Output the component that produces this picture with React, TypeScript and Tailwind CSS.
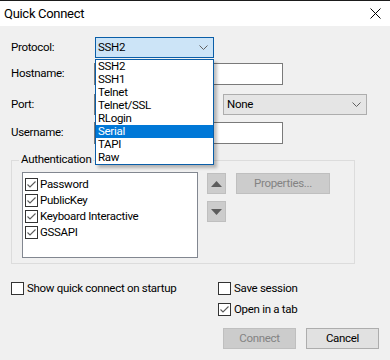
import type { SVGProps } from "react";

const font = "font-['Roboto','Liberation_Sans',sans-serif]";

const protocols = ["SSH2", "SSH1", "Telnet", "Telnet/SSL", "RLogin", "Serial", "TAPI", "Raw"];
const authMethods = ["Password", "PublicKey", "Keyboard Interactive", "GSSAPI"];

export default function App() {
  return (
    <div
      className={`relative h-[360px] w-[390px] overflow-hidden border-t border-[#1b1b1b] bg-[#f0f0f0] text-[11.5px] leading-none tracking-[-0.3px] text-black ${font}`}
    >
      {/* title bar */}
      <div className="flex h-[25px] items-center justify-between bg-white pl-[4px] pr-[9px]">
        <span className="text-[13px] tracking-[-0.3px]">Quick Connect</span>
        <IconClose className="h-[11px] w-[11px] text-black" />
      </div>

      <div className="flex flex-col pl-[11px]">
        {/* Protocol */}
        <div className="mt-[11px] flex h-[21px] items-center">
          <span className="w-[84px]">Protocol:</span>
          <div className="flex h-[21px] w-[119px] items-center justify-between border border-[#0a5ea8] bg-[#cce4f7] pl-[2px] pr-[5px]">
            <span>SSH2</span>
            <ChevronDown className="h-[5px] w-[9px] text-[#606060]" />
          </div>
        </div>

        {/* Hostname */}
        <div className="mt-[5px] flex h-[22px] items-center">
          <span className="w-[83px]">Hostname:</span>
          <div className="h-[22px] w-[189px] border border-[#7a7a7a] bg-white" />
        </div>

        {/* Port */}
        <div className="mt-[9px] flex h-[21px] items-center">
          <span className="w-[83px]">Port:</span>
          <div className="h-[21px] w-[119px] border border-[#7a7a7a] bg-white" />
          <div className="ml-[10px] flex h-[21px] w-[144px] items-center justify-between border border-[#adadad] bg-[#e5e5e5] pl-[3px] pr-[5px]">
            <span>None</span>
            <ChevronDown className="h-[5px] w-[9px] text-[#606060]" />
          </div>
        </div>

        {/* Username */}
        <div className="mt-[7px] flex h-[22px] items-center">
          <span className="w-[83px]">Username:</span>
          <div className="h-[22px] w-[189px] border border-[#7a7a7a] bg-white" />
        </div>

        {/* Authentication group */}
        <div className="relative mt-[16px] flex h-[104px] w-[344px] items-start border border-[#dcdcdc] pl-[10px] pt-[11px]">
          <span className="absolute -top-[7px] left-[7px] bg-[#f0f0f0] px-[2px]">Authentication</span>
          <div className="flex h-[86px] w-[176px] flex-col gap-[3px] border border-[#828790] bg-white pl-[2px] pt-[5px]">
            {authMethods.map((m) => (
              <div key={m} className="flex h-[13px] items-center gap-[2px]">
                <CheckBox checked />
                <span>{m}</span>
              </div>
            ))}
          </div>
          <div className="ml-[9px] flex flex-col gap-[7px] pt-[1px]">
            <div className="flex h-[21px] w-[19px] items-center justify-center border border-[#bfbfbf] bg-[#cccccc]">
              <TriangleUp className="h-[6px] w-[11px] text-[#5c5c5c]" />
            </div>
            <div className="flex h-[21px] w-[19px] items-center justify-center border border-[#bfbfbf] bg-[#cccccc]">
              <TriangleDown className="h-[6px] w-[11px] text-[#5c5c5c]" />
            </div>
          </div>
          <div className="ml-[10px] mt-[1px] flex h-[21px] w-[94px] items-center justify-center border border-[#bfbfbf] bg-[#cccccc] text-[#838383]">
            Properties...
          </div>
        </div>

        {/* bottom */}
        <div className="mt-[18px] flex">
          <div className="flex w-[207px] items-start">
            <label className="flex h-[13px] items-center gap-[3px]">
              <CheckBox />
              <span>Show quick connect on startup</span>
            </label>
          </div>
          <div className="flex flex-col">
            <label className="flex h-[13px] items-center gap-[3px]">
              <CheckBox />
              <span>Save session</span>
            </label>
            <label className="mt-[8px] flex h-[13px] items-center gap-[3px]">
              <CheckBox checked />
              <span>Open in a tab</span>
            </label>
            <div className="ml-[5px] mt-[12px] flex gap-[10px]">
              <div className="flex h-[21px] w-[73px] items-center justify-center border border-[#bfbfbf] bg-[#cccccc] text-[#838383]">
                Connect
              </div>
              <div className="flex h-[21px] w-[73px] items-center justify-center border border-[#adadad] bg-[#e1e1e1]">
                Cancel
              </div>
            </div>
          </div>
        </div>
      </div>

      {/* open protocol list */}
      <ul className="absolute left-[95px] top-[58px] w-[119px] border border-[#0a5ea8] bg-white shadow-[3px_3px_3px_rgba(0,0,0,0.25)]">
        {protocols.map((p) => (
          <li
            key={p}
            className={`flex h-[13px] items-center pl-[2px] ${p === "Serial" ? "bg-[#0078d7] text-white" : ""}`}
          >
            {p}
          </li>
        ))}
      </ul>
    </div>
  );
}

function CheckBox({ checked = false }: { checked?: boolean }) {
  return (
    <span className="flex h-[13px] w-[13px] shrink-0 items-center justify-center border border-[#333333] bg-white">
      {checked && (
        <svg viewBox="0 0 11 11" className="h-[11px] w-[11px]" fill="none" stroke="#5a5a5a" strokeWidth="1.1">
          <path d="M1.5 5.5 L4 8 L9.5 2.5" />
        </svg>
      )}
    </span>
  );
}

function IconClose(props: SVGProps<SVGSVGElement>) {
  return (
    <svg viewBox="0 0 11 11" fill="none" stroke="currentColor" strokeWidth="1" aria-hidden {...props}>
      <path d="M0.5 0.5 L10.5 10.5 M10.5 0.5 L0.5 10.5" />
    </svg>
  );
}

function ChevronDown(props: SVGProps<SVGSVGElement>) {
  return (
    <svg viewBox="0 0 9 5" fill="none" stroke="currentColor" strokeWidth="1" aria-hidden {...props}>
      <path d="M0.5 0.5 L4.5 4.5 L8.5 0.5" />
    </svg>
  );
}

function TriangleUp(props: SVGProps<SVGSVGElement>) {
  return (
    <svg viewBox="0 0 11 6" fill="currentColor" aria-hidden {...props}>
      <path d="M5.5 0 L11 6 L0 6 Z" />
    </svg>
  );
}

function TriangleDown(props: SVGProps<SVGSVGElement>) {
  return (
    <svg viewBox="0 0 11 6" fill="currentColor" aria-hidden {...props}>
      <path d="M0 0 L11 0 L5.5 6 Z" />
    </svg>
  );
}
